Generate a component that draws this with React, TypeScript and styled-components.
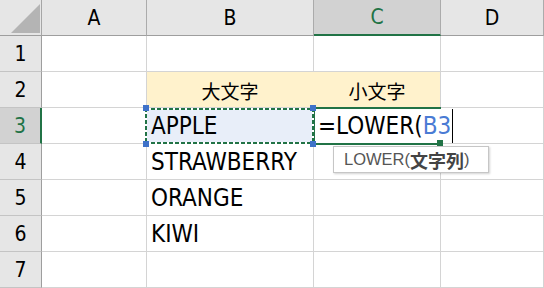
import React, { FC } from 'react';
import styled, { createGlobalStyle } from 'styled-components';

const GREEN = '#217346';
const LATIN = `"DejaVu Sans Condensed", "DejaVu Sans", "Noto Sans CJK JP", sans-serif`;
const JP = `"Noto Sans CJK JP", sans-serif`;

const GlobalStyle = createGlobalStyle`
  html, body {
    margin: 0;
    padding: 0;
    background: #fff;
  }
  body {
    width: 544px;
    height: 288px;
    overflow: hidden;
  }
`;

const Sheet = styled.div`
  display: grid;
  grid-template-columns: 42px 105px 167px 127px 1fr;
  grid-auto-rows: 36px;
  width: 544px;
  font-family: ${LATIN};
  font-stretch: condensed;
  color: #000;
`;

// select-all corner with its grey triangle
const Corner = styled.div`
  display: flex;
  align-items: flex-end;
  justify-content: flex-end;
  padding: 0 1px 2px 0;
  background: #e6e6e6;
  border-right: 1px solid #a6a6a6;
  border-bottom: 1px solid #9e9e9e;

  &::after {
    content: '';
    width: 29px;
    height: 29px;
    background: #b4b4b4;
    clip-path: polygon(100% 0, 100% 100%, 0 100%);
  }
`;

const ColHeader = styled.div<{ $selected?: boolean }>`
  display: flex;
  align-items: center;
  justify-content: center;
  background: ${(p) => (p.$selected ? '#d2d2d2' : '#e6e6e6')};
  border-right: 1px solid #ababab;
  border-bottom: ${(p) => (p.$selected ? `2px solid ${GREEN}` : '1px solid #9e9e9e')};
  color: ${(p) => (p.$selected ? GREEN : '#000')};
  font-size: 21px;
`;

const RowHeader = styled.div<{ $selected?: boolean }>`
  display: flex;
  align-items: center;
  justify-content: center;
  background: ${(p) => (p.$selected ? '#d2d2d2' : '#e6e6e6')};
  border-right: ${(p) => (p.$selected ? `2px solid ${GREEN}` : '1px solid #9e9e9e')};
  border-bottom: 1px solid #c4c4c4;
  color: ${(p) => (p.$selected ? GREEN : '#000')};
  font-size: 21px;
`;

const Cell = styled.div<{ $fill?: string; $center?: boolean; $joinRight?: boolean; $editing?: boolean }>`
  position: relative;
  z-index: ${(p) => (p.$editing ? 1 : 'auto')};
  display: flex;
  align-items: ${(p) => (p.$editing ? 'stretch' : 'center')};
  justify-content: ${(p) => (p.$center ? 'center' : 'flex-start')};
  padding: ${(p) => (p.$editing ? '0' : '1px 4px 0')};
  background: ${(p) => p.$fill || '#fff'};
  border-right: 1px solid ${(p) => (p.$joinRight && p.$fill ? p.$fill : '#d4d4d4')};
  border-bottom: 1px solid #d4d4d4;
  font-size: 24px;
  white-space: nowrap;
`;

const Jp = styled.span`
  font-family: ${JP};
  font-size: 19px;
`;

const dash = (dir: string) =>
  `repeating-linear-gradient(${dir}, ${GREEN} 0 4px, #fff 4px 6px)`;

// copy marquee ("marching ants") around the source cell
const Marquee = styled.div`
  position: absolute;
  left: -2px;
  top: 0;
  right: -1px;
  bottom: -1px;
  z-index: 3;
  display: grid;
  grid-template-columns: 1fr 1fr;
  grid-template-rows: 1fr 1fr;
  pointer-events: none;
  background:
    ${dash('90deg')} top / 100% 2px no-repeat,
    ${dash('90deg')} bottom / 100% 2px no-repeat,
    ${dash('180deg')} left / 2px 100% no-repeat,
    ${dash('180deg')} right / 2px 100% no-repeat;
`;

const Handle = styled.span<{ $right?: boolean; $bottom?: boolean }>`
  width: 6px;
  height: 6px;
  background: #3f72c9;
  justify-self: ${(p) => (p.$right ? 'end' : 'start')};
  align-self: ${(p) => (p.$bottom ? 'end' : 'start')};
  margin: ${(p) => (p.$bottom ? '0' : '-3px')} ${(p) => (p.$right ? '-2px' : '0')}
    ${(p) => (p.$bottom ? '-3px' : '0')} ${(p) => (p.$right ? '0' : '-2px')};
`;

const ActiveFrame = styled.div`
  position: absolute;
  left: -1px;
  top: -1px;
  right: -1px;
  bottom: -2px;
  z-index: 2;
  border-top: 2px solid ${GREEN};
  border-bottom: 2px solid ${GREEN};
  border-left: 2px solid ${GREEN};
  pointer-events: none;
`;

const FillHandle = styled.span`
  position: absolute;
  right: -3px;
  bottom: -3px;
  width: 6px;
  height: 6px;
  background: ${GREEN};
  z-index: 2;
`;

// in-cell editor, runs over the neighbouring cell
const Editor = styled.div`
  flex-shrink: 0;
  display: flex;
  align-items: center;
  padding: 1px 0 0 4px;
  background: #fff;
  font-size: 24px;
`;

const Ref = styled.span`
  color: #4a7bd4;
`;

const Caret = styled.span`
  display: inline-block;
  width: 1px;
  height: 34px;
  margin-left: 1px;
  background: #000;
`;

const Tip = styled.div`
  position: absolute;
  left: 19px;
  top: 38px;
  z-index: 4;
  width: 156px;
  height: 27px;
  box-sizing: border-box;
  display: flex;
  align-items: center;
  padding-left: 10px;
  background: #fff;
  border: 1px solid #c6c6c6;
  box-shadow: 1px 1px 2px rgba(0, 0, 0, 0.18);
  font-family: "Liberation Sans", ${JP};
  font-stretch: normal;
  font-size: 16.5px;
  color: #555;

  b {
    font-family: ${JP};
    font-size: 18px;
    font-weight: 700;
    color: #444;
  }
`;

type CellData = {
  text?: string;
  jp?: boolean;
  fill?: string;
  copy?: boolean;
  editing?: boolean;
};

const YELLOW = '#fff2cc';
const COLS = ['A', 'B', 'C', 'D'];

const rows: CellData[][] = [
  [{}, {}, {}, {}],
  [{}, { text: '大文字', jp: true, fill: YELLOW }, { text: '小文字', jp: true, fill: YELLOW }, {}],
  [{}, { text: 'APPLE', fill: '#e8eef9', copy: true }, { editing: true }, {}],
  [{}, { text: 'STRAWBERRY' }, {}, {}],
  [{}, { text: 'ORANGE' }, {}, {}],
  [{}, { text: 'KIWI' }, {}, {}],
  [{}, {}, {}, {}],
];

const ACTIVE_COL = 2;
const ACTIVE_ROW = 2;

const SheetCell: FC<{ data: CellData; col: number }> = ({ data, col }) => (
  <Cell $fill={data.fill} $center={data.jp} $joinRight={data.jp && col === 1} $editing={data.editing}>
    {data.jp ? <Jp>{data.text}</Jp> : data.text}
    {data.copy && (
      <Marquee>
        <Handle />
        <Handle $right />
        <Handle $bottom />
        <Handle $right $bottom />
      </Marquee>
    )}
    {data.editing && (
      <>
        <Editor>
          =LOWER(<Ref>B3</Ref>
          <Caret />
        </Editor>
        <ActiveFrame />
        <FillHandle />
        <Tip>
          LOWER(<b>文字列</b>)
        </Tip>
      </>
    )}
  </Cell>
);

const App: FC = () => (
  <>
    <GlobalStyle />
    <Sheet>
      <Corner />
      {COLS.map((c, i) => (
        <ColHeader key={c} $selected={i === ACTIVE_COL}>
          {c}
        </ColHeader>
      ))}
      {rows.map((row, r) => (
        <React.Fragment key={r}>
          <RowHeader $selected={r === ACTIVE_ROW}>{r + 1}</RowHeader>
          {row.map((cell, c) => (
            <SheetCell key={c} data={cell} col={c} />
          ))}
        </React.Fragment>
      ))}
    </Sheet>
  </>
);

export default App;
